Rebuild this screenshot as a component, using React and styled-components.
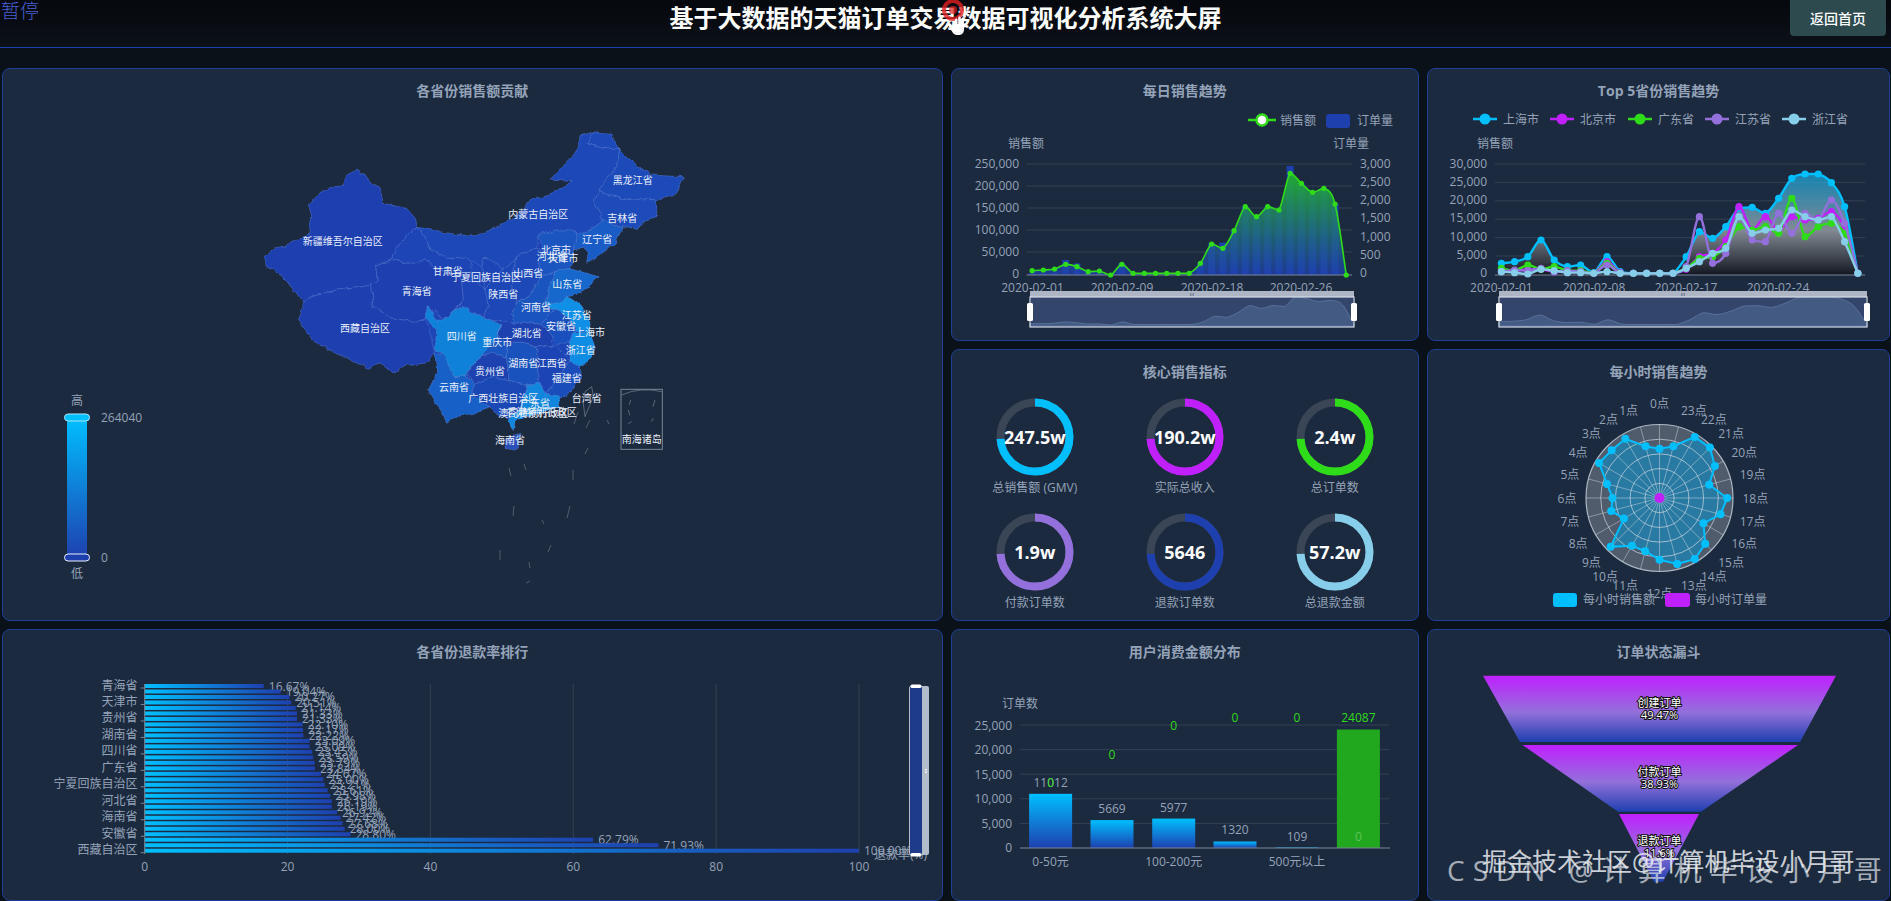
import React from 'react'
import styled, { createGlobalStyle } from 'styled-components'

const Global = createGlobalStyle`
  html, body {
    margin: 0;
    height: 100%;
    background: #0b1119;
    overflow: hidden;
  }
  body {
    font-family: 'Open Sans', 'Noto Sans CJK SC', sans-serif;
  }
`

const BLUE = '#1e40af'
const CYAN = '#00bfff'
const MAGENTA = '#c020ff'
const GREEN = '#2fdc1a'
const PURPLE = '#9370db'
const SKY = '#87ceeb'

const smooth = pts => {
  let d = `M${pts[0][0]} ${pts[0][1]}`
  for (let i = 0; i < pts.length - 1; i++) {
    const p0 = pts[i - 1] || pts[i]
    const p1 = pts[i]
    const p2 = pts[i + 1]
    const p3 = pts[i + 2] || p2
    const maxY = Math.max(p1[1], p2[1])
    const minY = Math.min(p1[1], p2[1])
    const c1y = Math.min(maxY, Math.max(minY, p1[1] + (p2[1] - p0[1]) / 6))
    const c2y = Math.min(maxY, Math.max(minY, p2[1] - (p3[1] - p1[1]) / 6))
    d += ` C${p1[0] + (p2[0] - p0[0]) / 6} ${c1y} ${p2[0] - (p3[0] - p1[0]) / 6} ${c2y} ${p2[0]} ${p2[1]}`
  }
  return d
}

const frame = (x, y, w, h) => ({
  viewBox: `${x + 1} ${y + 44} ${w - 2} ${h - 45}`,
  width: w - 2,
  height: h - 45,
})

// zoom-crop coordinates of the map, 3x from (240,120)
const mx = v => 240 + v / 3
const my = v => 120 + v / 3

const silhouette = '70,415 105,385 150,370 205,345 215,290 205,250 260,205 310,195 320,165 350,150 375,165 400,195 420,205 430,250 500,265 530,300 535,322 600,335 700,350 770,320 840,280 870,240 930,225 1000,185 930,180 975,130 1010,95 1025,45 1060,35 1110,40 1140,90 1180,130 1230,165 1330,170 1310,220 1250,240 1250,290 1215,300 1190,330 1150,320 1125,370 1060,420 1040,430 1045,400 1030,385 1000,390 1000,415 990,445 1040,460 1075,470 1020,520 985,530 1020,555 1050,600 1050,640 1065,680 1050,710 1020,745 1025,770 980,830 960,830 955,860 900,880 850,890 825,905 820,935 805,900 810,895 760,880 750,860 700,880 650,890 620,910 590,850 565,810 590,760 585,700 560,725 500,735 455,755 420,725 385,745 320,715 270,690 220,665 175,605 190,550 130,470 80,440'

const provinces = [
  ['#1d3fb0', '70,415 105,385 150,370 205,345 215,290 205,250 260,205 310,195 320,165 350,150 375,165 400,195 420,205 430,250 500,265 530,300 535,322 500,345 470,385 455,420 410,435 415,480 395,495 340,505 290,510 205,530 190,550 130,470 80,440'],
  ['#1d3fb0', '190,550 205,530 290,510 340,505 395,495 400,560 450,590 510,605 555,600 565,620 585,700 560,725 500,735 455,755 420,725 385,745 320,715 270,690 220,665 175,605'],
  ['#1d3fb0', '410,435 455,420 510,430 560,420 590,445 640,465 665,480 670,540 640,575 610,600 585,570 555,600 510,605 450,590 400,560 395,495 415,480'],
  ['#1d45b6', '535,322 555,350 570,385 620,415 680,410 695,425 690,470 735,510 745,555 730,590 680,570 665,560 640,575 670,540 665,480 640,465 590,445 560,420 510,430 455,420 470,385 500,345'],
  ['#1d48b8', '535,322 600,335 700,350 770,320 840,280 870,240 930,225 1000,185 930,180 975,130 1010,95 1025,45 1060,35 1040,70 1090,85 1140,85 1130,140 1090,190 1075,215 1060,240 1090,300 1040,340 1010,335 990,330 950,330 900,345 885,385 830,410 790,450 760,420 735,415 725,440 695,425 680,410 620,415 570,385 555,350'],
  ['#1d4ab9', '1060,35 1110,40 1140,90 1180,130 1230,165 1330,170 1310,220 1250,240 1195,235 1160,240 1110,225 1075,215 1090,190 1130,140 1140,85 1090,85 1040,70'],
  ['#1d4cba', '1075,215 1110,225 1160,240 1195,235 1250,240 1250,290 1215,300 1190,330 1150,320 1110,310 1090,300 1060,240'],
  ['#1a5cc6', '1010,335 1040,340 1090,300 1110,310 1150,320 1125,370 1060,420 1040,430 1045,400 1030,385 1000,390 1010,360'],
  ['#1a55c0', '895,345 950,330 990,330 1010,335 1010,360 1000,390 1000,415 990,445 945,455 900,470 895,420 910,390'],
  ['#1d48b8', '830,410 885,385 910,390 895,420 900,470 870,530 830,545 820,520 815,460'],
  ['#1d46b6', '790,450 830,410 815,460 820,520 830,545 815,580 820,610 750,600 730,590 745,555 735,510 765,480'],
  ['#1d45b5', '735,415 760,420 790,450 765,480 735,510 730,470 725,440'],
  ['#1a55bf', '830,545 870,530 900,470 945,455 925,510 915,545 945,570 915,600 905,610 860,605 820,610 815,580'],
  ['#1668cc', '945,455 990,445 1040,460 1075,470 1020,520 985,530 960,550 915,545 925,510'],
  ['#0f8fe6', '960,550 985,530 1020,555 1050,600 1050,640 1010,635 985,590 945,570 915,545'],
  ['#1a50bd', '945,570 985,590 1005,640 985,660 950,680 935,650 905,610 915,600'],
  ['#0f8de4', '1005,640 1050,640 1065,680 1050,710 1020,745 990,720 990,690 985,660'],
  ['#1d42b0', '820,610 860,605 905,610 935,650 935,680 890,680 850,670 800,670 775,640 750,600'],
  ['#1081d9', '565,560 590,600 610,600 640,575 665,560 730,590 785,620 770,650 745,680 725,710 690,740 680,770 640,770 610,700 585,690 590,630 555,595'],
  ['#1a55c0', '785,620 775,640 800,670 800,715 755,700 725,710 745,680 770,650'],
  ['#1d42b0', '690,740 725,710 755,700 800,715 810,780 760,770 700,790 685,765'],
  ['#1660c8', '585,700 610,700 640,770 680,770 700,790 695,830 750,860 700,880 650,890 620,910 590,850 565,810 590,760'],
  ['#1a52bd', '800,670 850,670 890,680 895,790 860,800 810,780 800,715'],
  ['#1d44b4', '890,680 935,680 950,680 990,720 950,780 920,820 895,790'],
  ['#1a4dba', '990,720 1020,745 1025,770 980,830 960,830 920,820 950,780'],
  ['#1a48b4', '700,790 760,770 810,780 860,800 840,860 810,895 760,880 750,860 695,830'],
  ['#1087dc', '860,800 895,790 920,820 960,830 955,860 900,880 850,890 825,905 820,935 805,900 810,895 840,860'],
  ['#2a4fb8', '790,955 840,940 835,985 800,990'],
]

const mapLabels = [
  ['新疆维吾尔自治区', 308, 363], ['西藏自治区', 375, 625], ['青海省', 530, 513], ['甘肃省', 623, 453],
  ['宁夏回族自治区', 738, 470], ['内蒙古自治区', 895, 282], ['黑龙江省', 1178, 180], ['吉林省', 1147, 293],
  ['辽宁省', 1072, 357], ['北京市', 948, 390], ['河北省', 935, 408], ['天津市', 970, 415], ['山西省', 865, 458],
  ['山东省', 982, 492], ['陕西省', 790, 523], ['河南省', 888, 560], ['江苏省', 1010, 585], ['安徽省', 963, 618],
  ['上海市', 1050, 637], ['湖北省', 860, 640], ['四川省', 665, 648], ['重庆市', 772, 667], ['浙江省', 1022, 690],
  ['湖南省', 850, 730], ['江西省', 935, 730], ['贵州省', 750, 752], ['福建省', 980, 773], ['云南省', 642, 802],
  ['台湾省', 1040, 835], ['广西壮族自治区', 790, 833], ['广东省', 885, 850], ['澳门特别行政区', 880, 878],
  ['香港特别行政区', 905, 877], ['海南省', 810, 960], ['南海诸岛', 1205, 958],
]

const islandDashes = [
  [509, 468, 511, 476], [524, 464, 526, 470], [573, 470, 573, 480], [514, 506, 513, 516], [570, 506, 567, 518],
  [542, 520, 544, 524], [500, 550, 500, 560], [551, 545, 548, 552], [529, 562, 530, 568], [526, 583, 530, 581],
  [578, 412, 574, 424], [590, 420, 586, 428], [588, 448, 585, 454], [607, 420, 609, 424],
]

const dailySales = [812, 810, 807, 793, 800, 815, 813, 825, 793, 820, 820, 820, 820, 820, 820, 790, 732, 745, 692, 620, 650, 620, 630, 520, 550, 577, 565, 612, 825]
const dailyOrders = [820, 820, 818, 780, 790, 820, 820, 825, 790, 820, 820, 820, 820, 820, 820, 790, 730, 728, 692, 620, 650, 620, 630, 498, 550, 577, 565, 612, 825]

const top5 = [
  [CYAN, [790, 785, 770, 720, 780, 800, 795, 818, 770, 815, 820, 820, 820, 820, 770, 695, 715, 680, 625, 622, 640, 595, 535, 522, 522, 548, 620, 820]],
  [MAGENTA, [812, 812, 808, 808, 815, 816, 816, 820, 785, 818, 820, 820, 820, 820, 808, 770, 760, 720, 620, 690, 650, 690, 650, 660, 655, 635, 685, 820]],
  [GREEN, [805, 812, 795, 808, 800, 812, 812, 820, 790, 820, 820, 820, 820, 820, 805, 775, 770, 740, 680, 690, 680, 700, 595, 710, 680, 670, 700, 820]],
  [PURPLE, [815, 810, 812, 805, 815, 812, 815, 820, 795, 820, 820, 820, 820, 820, 800, 650, 790, 760, 650, 720, 725, 640, 700, 640, 660, 600, 670, 820]],
  [SKY, [815, 818, 822, 808, 812, 818, 818, 820, 815, 820, 820, 820, 820, 820, 805, 785, 760, 745, 650, 700, 690, 685, 630, 650, 660, 650, 725, 820]],
]

const kpis = [
  ['247.5w', '总销售额 (GMV)', CYAN],
  ['190.2w', '实际总收入', MAGENTA],
  ['2.4w', '总订单数', GREEN],
  ['1.9w', '付款订单数', PURPLE],
  ['5646', '退款订单数', BLUE],
  ['57.2w', '总退款金额', SKY],
]

const hourly = [0.67, 0.73, 0.93, 0.92, 0.95, 0.74, 0.64, 0.68, 0.56, 0.94, 0.75, 0.75, 0.84, 0.93, 0.96, 0.88, 0.69, 0.86, 0.92, 0.7, 0.87, 0.97, 0.96, 0.73]

const refundRates = [16.67, 19.04, 20.27, 20.51, 21.14, 21.33, 21.33, 22.1, 22.17, 22.22, 23.09, 23.09, 23.45, 23.59, 23.79, 23.84, 24.67, 25.0, 25.21, 25.61, 25.98, 26.19, 26.19, 26.92, 27.42, 27.68, 28.0, 28.8, 62.79, 71.93, 100]
const refundNames = { 0: '青海省', 3: '天津市', 6: '贵州省', 9: '湖南省', 12: '四川省', 15: '广东省', 18: '宁夏回族自治区', 21: '河北省', 24: '海南省', 27: '安徽省', 30: '西藏自治区' }

const spend = [
  { x: 1050.6, v: 11012, label: '11012', ly: 782, zero: 782 },
  { x: 1112, v: 5669, label: '5669', ly: 808.5, zero: 754.5 },
  { x: 1173.7, v: 5977, label: '5977', ly: 807.5, zero: 725 },
  { x: 1235, v: 1320, label: '1320', ly: 829.5, zero: 717.5 },
  { x: 1297, v: 109, label: '109', ly: 836.5, zero: 717.5 },
]

const funnel = [
  { pts: '1483,675.7 1836,675.7 1800,742 1520,742', name: '创建订单', pct: '49.47%', y: 702 },
  { pts: '1522.5,745 1798,745 1701,811.7 1618,811.7', name: '付款订单', pct: '38.93%', y: 771 },
  { pts: '1619,814 1699,814 1663,881.7 1654,881.7', name: '退款订单', pct: '11.6%', y: 840 },
]

const Miniature = ({ x0, x1, values }) => {
  const step = (x1 - x0) / (values.length - 1)
  const pts = values.map((v, i) => [x0 + i * step, 325 - (825 - v) * 0.095])
  return (
    <g>
      <rect x={x0 + 1} y={297} width={x1 - x0 - 2} height={30} fill="#33456a" />
      <path d={`${smooth(pts)} L${x1} 326 L${x0} 326 Z`} fill="#435a82" stroke="#5f78a4" strokeWidth="0.8" />
      <rect x={x0} y={291} width={x1 - x0} height={6} fill="#aeb6c6" />
      <rect x={x0} y={297} width={x1 - x0} height={30} fill="none" stroke="#d6dce8" strokeWidth="1.2" />
      <path d={`M${(x0 + x1) / 2 - 1.5} 293v3M${(x0 + x1) / 2} 293v3M${(x0 + x1) / 2 + 1.5} 293v3`} stroke="#5a6478" strokeWidth="0.6" />
      <Handle x={x0 - 3} y={303} width={6} height={18} rx={1.5} />
      <Handle x={x1 - 3} y={303} width={6} height={18} rx={1.5} />
    </g>
  )
}

const DailyTrend = () => {
  const pt = (v, i) => [1032.1 + i * 11.22, v / 3]
  const line = dailySales.map(pt)
  return (
    <ChartSvg {...frame(951, 68, 467.5, 273)}>
      <defs>
        <linearGradient id="dailyArea" x1="0" y1="0" x2="0" y2="1">
          <stop offset="0" stopColor="#22b02e" stopOpacity="0.95" />
          <stop offset="1" stopColor={BLUE} stopOpacity="0.75" />
        </linearGradient>
      </defs>
      <line x1="1248" x2="1276" y1="120" y2="120" stroke={GREEN} strokeWidth="2.4" />
      <circle cx="1262" cy="120" r="5.5" fill="#fff" stroke={GREEN} strokeWidth="2.4" />
      <Label x="1280" y="120">销售额</Label>
      <rect x="1326" y="114" width="24" height="14" rx="3" fill={BLUE} />
      <Label x="1357" y="120">订单量</Label>
      <Label x="1026" y="143" $anchor="middle">销售额</Label>
      <Label x="1351" y="143" $anchor="middle">订单量</Label>
      {[0, 1, 2, 3, 4].map(i => (
        <GridLine key={i} x1="1026.5" x2="1352" y1={164 + i * 22} y2={164 + i * 22} />
      ))}
      {['250,000', '200,000', '150,000', '100,000', '50,000', '0'].map((t, i) => (
        <Label key={t} x="1019" y={163 + i * 22} $anchor="end">{t}</Label>
      ))}
      {['3,000', '2,500', '2,000', '1,500', '1,000', '500', '0'].map((t, i) => (
        <Label key={t} x="1360" y={163 + i * 18.33}>{t}</Label>
      ))}
      {dailyOrders.map((v, i) => (
        <rect key={i} x={pt(v, i)[0] - 3.5} y={v / 3} width="7" height={Math.max(275 - v / 3, 0)} fill={BLUE} />
      ))}
      <path d={`${smooth(line)} L${line[28][0]} 275 L${line[0][0]} 275 Z`} fill="url(#dailyArea)" />
      <AxisLine x1="1026.5" x2="1352" y1="275" y2="275" />
      <path d={smooth(line)} fill="none" stroke={GREEN} strokeWidth="1.6" />
      {line.map((p, i) => (
        <circle key={i} cx={p[0]} cy={p[1]} r="2.6" fill={GREEN} />
      ))}
      {[['2020-02-01', 1032.5], ['2020-02-09', 1122], ['2020-02-18', 1212], ['2020-02-26', 1301]].map(([t, x]) => (
        <Label key={t} x={x} y="287" $anchor="middle">{t}</Label>
      ))}
      <Miniature x0={1030} x1={1354} values={dailySales} />
    </ChartSvg>
  )
}

const TopFive = () => {
  const pt = (v, i) => [1501.4 + i * 13.2, v / 3]
  const shanghai = top5[0][1].map(pt)
  const legend = [['上海市', 1485, CYAN], ['北京市', 1562, MAGENTA], ['广东省', 1640, GREEN], ['江苏省', 1717, PURPLE], ['浙江省', 1794, SKY]]
  return (
    <ChartSvg {...frame(1427, 68, 463, 273)}>
      <defs>
        <linearGradient id="topArea" gradientUnits="userSpaceOnUse" x1="0" y1="175" x2="0" y2="275">
          <stop offset="0" stopColor="#1aa9dc" stopOpacity="0.7" />
          <stop offset="0.55" stopColor="#8e949c" stopOpacity="0.9" />
          <stop offset="1" stopColor="#11161f" stopOpacity="0.95" />
        </linearGradient>
      </defs>
      {legend.map(([t, x, c]) => (
        <g key={t}>
          <line x1={x - 12} x2={x + 12} y1="119" y2="119" stroke={c} strokeWidth="2.4" />
          <circle cx={x} cy="119" r="5.5" fill={c} />
          <Label x={x + 18} y="119">{t}</Label>
        </g>
      ))}
      <Label x="1495" y="143" $anchor="middle">销售额</Label>
      {[0, 1, 2, 3, 4, 5].map(i => (
        <GridLine key={i} x1="1495" x2="1865" y1={164 + i * 18.4} y2={164 + i * 18.4} />
      ))}
      {['30,000', '25,000', '20,000', '15,000', '10,000', '5,000', '0'].map((t, i) => (
        <Label key={t} x="1487" y={163 + i * 18.33} $anchor="end">{t}</Label>
      ))}
      <path d={`${smooth(shanghai)} L${shanghai[27][0]} 275 L${shanghai[0][0]} 275 Z`} fill="url(#topArea)" />
      <AxisLine x1="1495" x2="1865" y1="275" y2="275" />
      {top5.map(([c, vals]) => {
        const pts = vals.map(pt)
        return (
          <g key={c}>
            <path d={smooth(pts)} fill="none" stroke={c} strokeWidth="2.4" />
            {pts.map((p, i) => (
              <circle key={i} cx={p[0]} cy={p[1]} r="3.6" fill={c} />
            ))}
          </g>
        )
      })}
      {[['2020-02-01', 1501.4], ['2020-02-08', 1594], ['2020-02-17', 1686], ['2020-02-24', 1778]].map(([t, x]) => (
        <Label key={t} x={x} y="287" $anchor="middle">{t}</Label>
      ))}
      <Miniature x0={1499} x1={1867} values={top5[0][1]} />
    </ChartSvg>
  )
}

const ChinaMap = () => (
  <ChartSvg {...frame(2, 68, 940.5, 553)}>
    <defs>
      <linearGradient id="visual" x1="0" y1="0" x2="0" y2="1">
        <stop offset="0" stopColor={CYAN} />
        <stop offset="1" stopColor={BLUE} />
      </linearGradient>
      <filter id="border" x="-5%" y="-5%" width="110%" height="110%" colorInterpolationFilters="sRGB">
        <feTurbulence type="fractalNoise" baseFrequency="0.035" numOctaves="3" seed="4" />
        <feDisplacementMap in="SourceGraphic" scale="16" xChannelSelector="R" yChannelSelector="G" />
      </filter>
    </defs>
    <g transform="translate(240 120) scale(0.33333)">
      <g filter="url(#border)">
        <polygon points={silhouette} fill="#1d45b6" />
        {provinces.map(([fill, pts], i) => (
          <polygon key={i} points={pts} fill={fill} stroke="#6f8fd6" strokeOpacity="0.5" strokeWidth="2" strokeLinejoin="round" />
        ))}
      </g>
      <path d="M1035 815L1055 800L1060 830L1035 890L1030 850Z" fill="none" stroke="#7a8698" strokeWidth="2" />
      <rect x="1143" y="808" width="124" height="180" fill="none" stroke="#7a8698" strokeWidth="3" />
      <path d="M1145 825Q1200 800 1265 815M1172 840l-4 14M1165 870l4 16M1175 905l-10 6M1245 840l-6 20M1240 895l-6 10" fill="none" stroke="#7a8698" strokeWidth="2" />
    </g>
    {islandDashes.map((d, i) => (
      <line key={i} x1={d[0]} y1={d[1]} x2={d[2]} y2={d[3]} stroke="#7a8698" strokeWidth="0.8" strokeOpacity="0.7" />
    ))}
    {mapLabels.map(([t, x, y]) => (
      <MapLabel key={t} x={mx(x)} y={my(y)}>{t}</MapLabel>
    ))}
    <Label x="77" y="400" $anchor="middle">高</Label>
    <rect x="67" y="417" width="20" height="141" fill="url(#visual)" />
    <rect x="64.5" y="414" width="25" height="7" rx="3.5" fill={CYAN} stroke="#a8e6ff" />
    <rect x="64.5" y="554" width="25" height="7" rx="3.5" fill={BLUE} stroke="#e8eefc" />
    <Label x="101" y="417">264040</Label>
    <Label x="101" y="557">0</Label>
    <Label x="77" y="573" $anchor="middle">低</Label>
  </ChartSvg>
)

const HourlyRadar = () => {
  const cx = 1659.5
  const cy = 498
  const r = 73.5
  const at = (rad, i) => {
    const a = (i * 15 * Math.PI) / 180
    return [cx - rad * Math.sin(a), cy - rad * Math.cos(a)]
  }
  const data = hourly.map((v, i) => at(v * r, i))
  return (
    <ChartSvg {...frame(1427, 349, 463, 272)}>
      <circle cx={cx} cy={cy} r={r} fill="#505b6b" />
      <polygon points={data.map(p => p.join(',')).join(' ')} fill="#0d8fc6" fillOpacity="0.6" />
      {[1, 2, 3, 4, 5].map(i => (
        <circle key={i} cx={cx} cy={cy} r={(r * i) / 5} fill="none" stroke="#ccd6e0" strokeWidth={i === 5 ? 1.2 : 0.9} strokeOpacity="0.8" />
      ))}
      {hourly.map((_, i) => {
        const e = at(r, i)
        return <line key={i} x1={cx} y1={cy} x2={e[0]} y2={e[1]} stroke="#ccd6e0" strokeWidth="0.7" strokeOpacity="0.7" />
      })}
      <polygon points={data.map(p => p.join(',')).join(' ')} fill="none" stroke={CYAN} strokeWidth="2" />
      {data.map((p, i) => (
        <circle key={i} cx={p[0]} cy={p[1]} r="4" fill={CYAN} />
      ))}
      <circle cx={cx} cy={cy} r="5" fill={MAGENTA} />
      {hourly.map((_, i) => {
        const vertical = i % 12 === 0
        const x = at(83, i)[0]
        const y = at(vertical ? 95 : 91, i)[1]
        const anchor = vertical ? 'middle' : i < 12 ? 'end' : 'start'
        return <Label key={i} x={x} y={y} $anchor={anchor}>{i}点</Label>
      })}
      <rect x="1553" y="593" width="24" height="14" rx="3" fill={CYAN} />
      <Label x="1583" y="599">每小时销售额</Label>
      <rect x="1665" y="593" width="25" height="14" rx="3" fill={MAGENTA} />
      <Label x="1695" y="599">每小时订单量</Label>
    </ChartSvg>
  )
}

const RefundRank = () => {
  const ux = 7.143
  const x0 = 144.7
  return (
    <ChartSvg {...frame(2, 629, 940.5, 272)}>
      <defs>
        <linearGradient id="refundBar" x1="0" y1="0" x2="1" y2="0">
          <stop offset="0" stopColor={CYAN} />
          <stop offset="1" stopColor={BLUE} />
        </linearGradient>
      </defs>
      {[20, 40, 60, 80, 100].map(v => (
        <line key={v} x1={x0 + v * ux} x2={x0 + v * ux} y1="684" y2="854" stroke="#334155" strokeWidth="1" />
      ))}
      {refundRates.map((v, i) => {
        const y = 686 + i * 5.49
        return (
          <g key={i}>
            <rect x={x0} y={y - 2} width={v * ux} height="4" fill="url(#refundBar)" />
            <Label x={x0 + v * ux + 5} y={y}>{v.toFixed(2)}%</Label>
          </g>
        )
      })}
      <line x1={x0} x2={x0} y1="684" y2="854" stroke="#7a8698" strokeWidth="1" />
      {Object.entries(refundNames).map(([i, t]) => {
        const y = 685 + i * 5.49
        return (
          <g key={i}>
            <line x1={x0 - 4} x2={x0} y1={y + 3} y2={y + 3} stroke="#7a8698" />
            <Label x="137.4" y={y} $anchor="end">{t}</Label>
          </g>
        )
      })}
      {[0, 20, 40, 60, 80, 100].map(v => (
        <Label key={v} x={x0 + v * ux} y="866.5" $anchor="middle">{v}</Label>
      ))}
      <Label x="874" y="854">退款率(%)</Label>
      <rect x="909" y="686" width="20" height="169" rx="2" fill="#b3bccb" />
      <rect x="910" y="687" width="12" height="167" fill="#1e3a8a" />
      <rect x="910.5" y="684.5" width="11" height="3.5" rx="1.5" fill="#fff" />
      <rect x="910.5" y="853" width="11" height="3.5" rx="1.5" fill="#fff" />
      <path d="M925 769.5h2M925 771h2M925 772.5h2" stroke="#fff" strokeWidth="0.8" />
    </ChartSvg>
  )
}

const SpendChart = () => {
  const y = v => 848 - (v / 25000) * 123
  return (
    <ChartSvg {...frame(951, 629, 467.5, 272)}>
      <defs>
        <linearGradient id="spendBar" x1="0" y1="0" x2="0" y2="1">
          <stop offset="0" stopColor={CYAN} />
          <stop offset="1" stopColor={BLUE} />
        </linearGradient>
      </defs>
      <Label x="1020" y="703" $anchor="middle">订单数</Label>
      {[5000, 10000, 15000, 20000, 25000].map(v => (
        <GridLine key={v} x1="1020" x2="1389" y1={y(v)} y2={y(v)} />
      ))}
      {['25,000', '20,000', '15,000', '10,000', '5,000', '0'].map((t, i) => (
        <Label key={t} x="1012" y={725 + i * 24.5} $anchor="end">{t}</Label>
      ))}
      {spend.map(s => (
        <g key={s.label}>
          <rect x={s.x - 21.5} y={y(s.v)} width="43" height={848 - y(s.v)} fill="url(#spendBar)" />
          <Label x={s.x} y={s.ly} $anchor="middle">{s.label}</Label>
          <Label x={s.x} y={s.zero} $anchor="middle" $fill={GREEN}>0</Label>
        </g>
      ))}
      <rect x="1336.9" y={y(24087)} width="43" height={848 - y(24087)} fill="#22a81e" />
      <Label x="1358.4" y="717.5" $anchor="middle" $fill={GREEN}>24087</Label>
      <Label x="1358.4" y="836.5" $anchor="middle" $fill="#5cc45c">0</Label>
      <AxisLine x1="1020" x2="1390" y1="848" y2="848" />
      {[['0-50元', 1050.6], ['100-200元', 1173.7], ['500元以上', 1297]].map(([t, x]) => (
        <Label key={t} x={x} y="861.5" $anchor="middle">{t}</Label>
      ))}
    </ChartSvg>
  )
}

const Funnel = () => (
  <ChartSvg {...frame(1427, 629, 463, 272)}>
    <defs>
      <linearGradient id="funnelFill" x1="0" y1="0" x2="0" y2="1">
        <stop offset="0" stopColor={MAGENTA} />
        <stop offset="0.55" stopColor={PURPLE} />
        <stop offset="1" stopColor={BLUE} />
      </linearGradient>
    </defs>
    {funnel.map(f => (
      <g key={f.name}>
        <polygon points={f.pts} fill="url(#funnelFill)" />
        <FunnelLabel x="1659.5" y={f.y}>{f.name}</FunnelLabel>
        <FunnelLabel x="1659.5" y={f.y + 12}>{f.pct}</FunnelLabel>
      </g>
    ))}
  </ChartSvg>
)

const Gauge = ({ value, label, color }) => (
  <GaugeItem>
    <GaugeRing>
      <svg width="78" height="78" viewBox="0 0 78 78">
        <circle cx="39" cy="39" r="34.5" fill="none" stroke="#3a4556" strokeWidth="8" />
        <circle
          cx="39"
          cy="39"
          r="34.5"
          fill="none"
          stroke={color}
          strokeWidth="8"
          strokeDasharray={`${2 * Math.PI * 34.5 * 0.74} ${2 * Math.PI * 34.5}`}
          transform="rotate(-90 39 39)"
        />
      </svg>
      <GaugeValue>{value}</GaugeValue>
    </GaugeRing>
    <GaugeLabel>{label}</GaugeLabel>
  </GaugeItem>
)

const Cursor = () => (
  <CursorMark width="32" height="40" viewBox="0 0 32 40">
    <circle cx="11" cy="10" r="9" fill="none" stroke="#e02020" strokeWidth="4" strokeOpacity="0.8" />
    <circle cx="11" cy="10" r="4" fill="#e02020" fillOpacity="0.7" />
    <path d="M13 20c0-2 2.6-2 2.6 0v4h.6v-6c0-2 2.6-2 2.6 0v6h.6v-5c0-2 2.6-2 2.6 0v10c0 4-2 6-6 6s-5-2-7-5l-3-5c-1-2 2-3 3-1l2 3z" fill="#fff" />
  </CursorMark>
)

const App = () => (
  <>
    <Global />
    <Page>
      <Header>
        <Pause>暂停</Pause>
        <Title>基于大数据的天猫订单交易数据可视化分析系统大屏</Title>
        <BackBtn>返回首页</BackBtn>
      </Header>
      <Board>
        <Card $tall>
          <CardTitle>各省份销售额贡献</CardTitle>
          <ChinaMap />
        </Card>
        <Card>
          <CardTitle>每日销售趋势</CardTitle>
          <DailyTrend />
        </Card>
        <Card>
          <CardTitle>Top 5省份销售趋势</CardTitle>
          <TopFive />
        </Card>
        <Card>
          <CardTitle>核心销售指标</CardTitle>
          <GaugeGrid>
            {kpis.map(k => (
              <Gauge key={k[1]} value={k[0]} label={k[1]} color={k[2]} />
            ))}
          </GaugeGrid>
        </Card>
        <Card>
          <CardTitle>每小时销售趋势</CardTitle>
          <HourlyRadar />
        </Card>
        <Card>
          <CardTitle>各省份退款率排行</CardTitle>
          <RefundRank />
        </Card>
        <Card>
          <CardTitle>用户消费金额分布</CardTitle>
          <SpendChart />
        </Card>
        <Card>
          <CardTitle>订单状态漏斗</CardTitle>
          <Funnel />
        </Card>
      </Board>
      <Cursor />
      <WatermarkCsdn>CSDN @计算机毕设小月哥</WatermarkCsdn>
      <WatermarkJuejin>掘金技术社区@计算机毕设小月哥</WatermarkJuejin>
    </Page>
  </>
)

export default App

const Page = styled.div`
  position: relative;
  width: 1891px;
  height: 901px;
  overflow: hidden;
  background: #0b1119;
`
const Header = styled.header`
  display: grid;
  grid-template-columns: 1fr auto 1fr;
  height: 48px;
  box-sizing: border-box;
  background: linear-gradient(#05080d, #0c1118);
  border-bottom: 1px solid ${BLUE};
`
const Pause = styled.span`
  color: #4a5fd0;
  font-size: 19px;
  line-height: 22px;
  font-weight: 300;
  padding-left: 1px;
`
const Title = styled.h1`
  margin: 0;
  color: #fff;
  font-size: 24px;
  font-weight: 700;
  line-height: 36px;
  white-space: nowrap;
`
const BackBtn = styled.button`
  justify-self: end;
  width: 96px;
  height: 36px;
  margin-right: 5px;
  border: 0;
  border-radius: 0 0 4px 4px;
  background: #2d4a4f;
  color: #fff;
  font-family: inherit;
  font-size: 14px;
  font-weight: 500;
`
const Board = styled.main`
  display: grid;
  grid-template-columns: 940.5px 467.5px 463px;
  grid-template-rows: 273px 272px 272px;
  gap: 8px 8.5px;
  padding: 20px 0 0 2px;
`
const Card = styled.section`
  grid-row: ${p => (p.$tall ? 'span 2' : 'auto')};
  box-sizing: border-box;
  background: #1c2a3f;
  border: 1px solid #1e3f96;
  border-radius: 8px;
  overflow: hidden;
`
const CardTitle = styled.h2`
  margin: 0;
  height: 43px;
  color: #94a3b8;
  font-size: 14px;
  font-weight: 700;
  line-height: 43px;
  text-align: center;
`
const ChartSvg = styled.svg`
  display: block;
`
const Label = styled.text`
  font-size: 12px;
  fill: ${p => p.$fill || '#94a3b8'};
  text-anchor: ${p => p.$anchor || 'start'};
  dominant-baseline: central;
`
const MapLabel = styled.text`
  font-size: 10px;
  fill: #eaf0fb;
  text-anchor: middle;
  dominant-baseline: central;
`
const FunnelLabel = styled.text`
  font-size: 11px;
  fill: #fff;
  stroke: #111;
  stroke-width: 2px;
  paint-order: stroke;
  text-anchor: middle;
  dominant-baseline: central;
`
const GridLine = styled.line`
  stroke: #334155;
  stroke-width: 1;
`
const AxisLine = styled.line`
  stroke: #7a8698;
  stroke-width: 1;
`
const Handle = styled.rect`
  fill: #fff;
`
const GaugeGrid = styled.div`
  display: grid;
  grid-template-columns: repeat(3, 150px);
  justify-content: center;
  row-gap: 16px;
  padding-top: 5px;
`
const GaugeItem = styled.div`
  display: flex;
  flex-direction: column;
  align-items: center;
  gap: 3px;
`
const GaugeRing = styled.div`
  position: relative;
  width: 78px;
  height: 78px;
  svg {
    display: block;
  }
`
const GaugeValue = styled.span`
  position: absolute;
  inset: 0;
  display: flex;
  align-items: center;
  justify-content: center;
  color: #fff;
  font-size: 18px;
  font-weight: 700;
`
const GaugeLabel = styled.span`
  color: #94a3b8;
  font-size: 12px;
  line-height: 18px;
`
const CursorMark = styled.svg`
  position: absolute;
  left: 942px;
  top: 0;
`
const WatermarkCsdn = styled.div`
  position: absolute;
  left: 1447px;
  top: 852px;
  color: rgba(220, 225, 230, 0.72);
  font-size: 28px;
  font-weight: 400;
  letter-spacing: 8px;
  line-height: 36px;
  white-space: nowrap;
`
const WatermarkJuejin = styled.div`
  position: absolute;
  left: 1482px;
  top: 846px;
  color: rgba(235, 238, 242, 0.85);
  font-size: 25px;
  font-weight: 400;
  line-height: 30px;
  white-space: nowrap;
`
